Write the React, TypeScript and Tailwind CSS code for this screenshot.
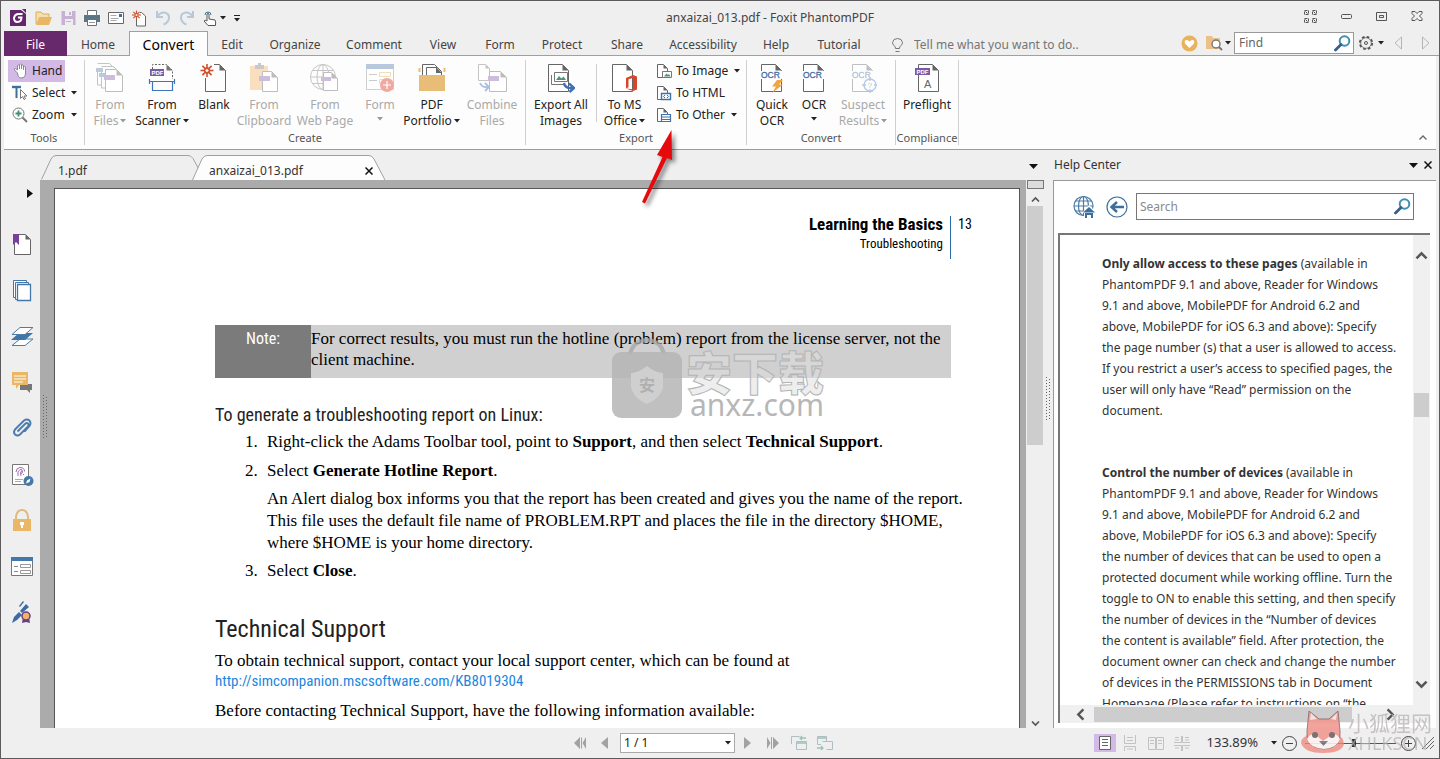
import { useState, type ReactNode } from "react";

const UI = "font-['Noto_Sans','Noto_Sans_CJK_SC',sans-serif]";
const NARROW = "font-['Roboto_Condensed','Liberation_Sans',sans-serif]";

const menuTabs = [
  { name: "Home", width: "w-[62px]" },
  { name: "Convert", width: "w-[79px]" },
  { name: "Edit", width: "w-[48px]" },
  { name: "Organize", width: "w-[78px]" },
  { name: "Comment", width: "w-[80px]" },
  { name: "View", width: "w-[58px]" },
  { name: "Form", width: "w-[56px]" },
  { name: "Protect", width: "w-[68px]" },
  { name: "Share", width: "w-[62px]" },
  { name: "Accessibility", width: "w-[90px]" },
  { name: "Help", width: "w-[56px]" },
  { name: "Tutorial", width: "w-[70px]" },
];

const helpSections = [
  {
    title: "Only allow access to these pages",
    lines: [
      " (available in",
      "PhantomPDF 9.1 and above, Reader for Windows",
      "9.1 and above, MobilePDF for Android 6.2 and",
      "above, MobilePDF for iOS 6.3 and above): Specify",
      "the page number (s) that a user is allowed to access.",
      "If you restrict a user’s access to specified pages, the",
      "user will only have “Read” permission on the",
      "document.",
    ],
  },
  {
    title: "Control the number of devices",
    lines: [
      " (available in",
      "PhantomPDF 9.1 and above, Reader for Windows",
      "9.1 and above, MobilePDF for Android 6.2 and",
      "above, MobilePDF for iOS 6.3 and above): Specify",
      "the number of devices that can be used to open a",
      "protected document while working offline. Turn the",
      "toggle to ON to enable this setting, and then specify",
      "the number of devices in the “Number of devices",
      "the content is available” field. After protection, the",
      "document owner can check and change the number",
      "of devices in the PERMISSIONS tab in Document",
      "Homepage (Please refer to instructions on “the",
    ],
  },
];

function Svg({ w, h, children, className = "" }: { w: number; h: number; children: ReactNode; className?: string }) {
  return (
    <svg width={w} height={h} viewBox={`0 0 ${w} ${h}`} fill="none" className={`shrink-0 ${className}`} aria-hidden="true">
      {children}
    </svg>
  );
}

function Caret({ color = "#222", className = "" }: { color?: string; className?: string }) {
  return (
    <Svg w={6} h={4} className={className}>
      <path d="M0 0h6L3 3.6z" fill={color} />
    </Svg>
  );
}

function Sheet({ x, y, w, h, f = 6, s = "#666" }: { x: number; y: number; w: number; h: number; f?: number; s?: string }) {
  return (
    <>
      <path d={`M${x} ${y}h${w - f}l${f} ${f}v${h - f}h${-w}z`} fill="#fff" stroke={s} />
      <path d={`M${x + w - f} ${y}v${f}h${f}z`} fill={s} />
    </>
  );
}

function Magnifier({ size = 17 }: { size?: number }) {
  return (
    <svg width={size} height={size} viewBox="0 0 17 17" fill="none" aria-hidden="true">
      <circle cx="10.5" cy="6" r="4.8" stroke="#3f8fb5" strokeWidth="2" />
      <path d="M7 9.5l-5.5 5.5" stroke="#3a5f85" strokeWidth="2.8" strokeLinecap="round" />
    </svg>
  );
}

/* ---------- ribbon icons ---------- */

function FilesIcon() {
  return (
    <Svg w={28} h={30}>
      <path d="M1.5 5v17h4M1.5 .5h12l4 4" stroke="#c4c4c4" />
      <path d="M5.500 6v19h4M5.500 3.500h12l3 3" stroke="#c4c4c4" />
      <path d="M0 5h7v4H0zM3 10h6v4H3z" fill="#bccbd8" />
      <Sheet x={9.5} y={6.5} w={17} h={22} s="#bdbdbd" />
      <path d="M8 12h11v5H8z" fill="#cdbddd" />
    </Svg>
  );
}

function ScannerIcon() {
  return (
    <Svg w={28} h={30}>
      <path d="M4.5 6V1.500h14l6 6V16" stroke="#666" strokeDasharray="2 1.5" />
      <path d="M18.500 1.500v6h6z" fill="#777" />
      <path d="M2 6h14v7H2z" fill="#7a5aa5" />
      <text x="3.500" y="11.800" fontSize="6" fontWeight="700" fill="#fff" fontFamily="Liberation Sans">PDF</text>
      <path d="M1.500 16v5M26.500 16v5M1.500 18.500h25M4.500 18.500v9h20v-9" stroke="#3e74b8" strokeWidth="1.200" />
    </Svg>
  );
}

function Burst({ x, y, r }: { x: number; y: number; r: number }) {
  return (
    <g transform={`translate(${x} ${y})`} stroke="#d0532f" strokeWidth={r / 4}>
      <circle r={r / 2.8} />
      {[0, 45, 90, 135, 180, 225, 270, 315].map((a) => (
        <path key={a} d={`M0 ${-r / 2.5}V${-r}`} transform={`rotate(${a})`} />
      ))}
    </g>
  );
}

function BlankIcon() {
  return (
    <Svg w={28} h={30}>
      <path d="M5.500 15v13.500h20v-21l-6-6H14" stroke="#666" />
      <path d="M19.500 1.500v6h6z" fill="#666" />
      <Burst x={7} y={7.500} r={6.500} />
    </Svg>
  );
}

function ClipboardIcon() {
  return (
    <Svg w={28} h={30}>
      <path d="M0 3h18v24H0z" fill="#f9dfbd" />
      <path d="M5 4V2h3V0h3v2h3v4H5z" fill="#c9c9c9" />
      <Sheet x={12.5} y={8.5} w={15} h={20} s="#bdbdbd" />
      <path d="M9 13h11v5H9z" fill="#cdbddd" />
    </Svg>
  );
}

function WebIcon() {
  return (
    <Svg w={30} h={30}>
      <g stroke="#c6c6c6">
        <circle cx="13" cy="14" r="12.500" />
        <ellipse cx="13" cy="14" rx="6" ry="12.500" />
        <path d="M13 1.500v25M.5 14h25M2.500 7.500h21M2.500 20.500h21" />
      </g>
      <Sheet x={13.5} y={9.500} w={14} h={18} s="#bdbdbd" />
      <path d="M11 14h10v4H11z" fill="#cdbddd" />
    </Svg>
  );
}

function FormIcon() {
  return (
    <Svg w={30} h={30}>
      <path d="M1.500 1.500h27v25h-27z" fill="#fff" stroke="#cfcfcf" />
      <path d="M1 1h28v5H1z" fill="#b8c8dd" />
      <path d="M4 11.500h8M4 17.500h8" stroke="#ccc" />
      <path d="M14.500 9.500h11v4h-11zM14.500 16.500h11v4h-11z" stroke="#f1ddb8" />
      <circle cx="22" cy="22" r="7" fill="#f0a9a0" />
      <path d="M22 18v8M18 22h8" stroke="#fff" strokeWidth="1.200" />
    </Svg>
  );
}

function PortfolioIcon() {
  return (
    <Svg w={28} h={30}>
      <path d="M1.500 5v4M26.500 5v4" stroke="#e7bd75" strokeWidth="2" />
      <path d="M4.500 12V1.500h12l3 3" stroke="#666" />
      <path d="M8.500 12V4.500h11l4 4V12" fill="#fff" stroke="#666" />
      <path d="M18 4l6 6h-6z" fill="#666" />
      <path d="M1 12h26v16H1z" fill="#e8bd77" />
    </Svg>
  );
}

function CombineIcon() {
  return (
    <Svg w={30} h={30}>
      <Sheet x={1.500} y={1.500} w={11} h={16} f={4} s="#c4c4c4" />
      <Sheet x={12.500} y={8.500} w={17} h={20} s="#bdbdbd" />
      <path d="M11 13h11v5H11z" fill="#cdbddd" />
      <path d="M3 20q2 5 8 4M8 20l4 4-4 4" stroke="#a9bfe2" strokeWidth="1.800" />
    </Svg>
  );
}

function ExportImagesIcon() {
  return (
    <Svg w={28} h={30}>
      <Sheet x={1.5} y={1.5} w={20} h={27} />
      <path d="M4.500 12v9.500h12" stroke="#777" />
      <path d="M7.500 9.500h13v9h-13z" fill="#fff" stroke="#777" />
      <path d="M9 17l3-4 2.500 2.500 2-2 2.500 3.500z" fill="#4d9474" />
      <path d="M17 20q1 6 9 5M22 20.500l5 4.500-4.500 4" stroke="#3e70ba" strokeWidth="2.400" />
    </Svg>
  );
}

function OfficeIcon() {
  return (
    <Svg w={28} h={30}>
      <Sheet x={1.5} y={1.5} w={20} h={27} />
      <path d="M15 15l7-3 4 1.500v13l-4 1.500-7-2.500 7 .8V15l-4.500 1.200v8L15 25.500z" fill="#d8452a" />
    </Svg>
  );
}

function OcrIcon({ kind }: { kind?: "quick" | "suspect" }) {
  const dim = kind === "suspect";
  return (
    <Svg w={28} h={30} className={dim ? "opacity-40" : ""}>
      <Sheet x={3.5} y={1.5} w={20} h={27} />
      <path d="M3 8h21v8H3z" fill="#fff" />
      <text x="3" y="14.500" fontSize="8.500" fill="#3e6ea8" stroke="#3e6ea8" strokeWidth=".3" fontFamily="Liberation Sans">OCR</text>
      {kind === "quick" && <path d="M19 17h6l-4 4.500h4L14 30l4-6.500h-4z" fill="#efa540" />}
      {dim && (
        <g stroke="#4c7fc0" strokeWidth="1.300">
          <circle cx="21" cy="22" r="6" fill="#fff" />
          <path d="M21 14v4M21 26v4M13 22h4M25 22h4" />
          <text x="18.800" y="25" fontSize="8" stroke="none" fill="#4c7fc0" fontFamily="Liberation Sans">?</text>
        </g>
      )}
    </Svg>
  );
}

function PreflightIcon() {
  return (
    <Svg w={28} h={30}>
      <Sheet x={5.5} y={1.500} w={20} h={27} />
      <path d="M2 5h15v7H2z" fill="#7a5aa5" />
      <text x="3.500" y="10.800" fontSize="6" fontWeight="700" fill="#fff" fontFamily="Liberation Sans">PDF</text>
      <text x="11" y="24.500" fontSize="11" fill="#666" fontFamily="Liberation Sans">A</text>
    </Svg>
  );
}

/* ---------- ribbon pieces ---------- */

function BigButton({ icon, top, bottom, caret, disabled, className }: {
  icon: ReactNode;
  top: string;
  bottom?: string;
  caret?: boolean;
  disabled?: boolean;
  className: string;
}) {
  return (
    <button
      disabled={disabled}
      className={`flex shrink-0 flex-col items-center whitespace-nowrap pt-[7px] text-xs leading-4 ${disabled ? "text-[#a9a9a9]" : "text-[#222]"} ${className}`}
    >
      <span className="flex h-[34px] items-start">{icon}</span>
      <span>{top}</span>
      <span className="flex h-4 items-center gap-0.5">
        {bottom}
        {caret && <Caret color={disabled ? "#999" : "#222"} className={bottom ? "" : "mb-1"} />}
      </span>
    </button>
  );
}

function Group({ label, children, className = "" }: { label: string; children: ReactNode; className?: string }) {
  return (
    <section className={`my-1 flex shrink-0 flex-col border-r border-[#d0d0d0] ${className}`}>
      <div className="-mt-1 flex h-[74px] shrink-0">{children}</div>
      <h2 className="text-center text-[11px] leading-4 text-[#555]">{label}</h2>
    </section>
  );
}

function SmallButton({ icon, label, caret, active }: { icon: ReactNode; label: string; caret?: boolean; active?: boolean }) {
  return (
    <button className={`flex h-[22px] items-center whitespace-nowrap text-xs text-[#222] ${active ? "bg-[#d3b9e6] pr-[3px]" : ""}`}>
      <span className="flex w-6 justify-center">{icon}</span>
      <span>{label}</span>
      {caret && <Caret className="ml-1.5" />}
    </button>
  );
}

function Ribbon() {
  return (
    <div className="mx-[3px] flex h-[94px] shrink-0 border-b border-[#9b9b9b] bg-[#fdfdfd]">
      <Group label="Tools" className="w-[81px]">
        <div className="ml-1 flex flex-col items-start pt-1">
          <SmallButton
            active
            label="Hand"
            icon={
              <Svg w={15} h={16}>
                <path d="M4.500 10L1.500 7q-.5-1.500 1-1.500L4.500 7V2.500q1-1 2 0V6 1.500q1-1 2 0V6 2.500q1-1 2 0V7 4q1-1 2 0v6q0 5-4.500 5-3 0-3.500-5z" fill="#fff" stroke="#8d8496" />
              </Svg>
            }
          />
          <SmallButton
            caret
            label="Select"
            icon={
              <Svg w={16} h={16}>
                <path d="M0 2h9" stroke="#3d7199" strokeWidth="2.400" />
                <path d="M4.500 2v11" stroke="#3d7199" strokeWidth="2" />
                <path d="M8.500 4.500v9l2-2 1.500 3 1.500-.8-1.500-2.700h3z" fill="#fff" stroke="#777" />
              </Svg>
            }
          />
          <SmallButton
            caret
            label="Zoom"
            icon={
              <Svg w={16} h={16}>
                <circle cx="6.500" cy="6.500" r="5.500" stroke="#777" />
                <path d="M6.500 3.500v6M3.500 6.500h6" stroke="#3f9070" strokeWidth="1.800" />
                <path d="M10.500 10.500l4.500 4.500" stroke="#777" strokeWidth="2" />
              </Svg>
            }
          />
        </div>
      </Group>
      <Group label="Create" className="w-[441px]">
        <BigButton className="w-[50px]" icon={<FilesIcon />} top="From" bottom="Files" caret disabled />
        <BigButton className="w-[54px]" icon={<ScannerIcon />} top="From" bottom="Scanner" caret />
        <BigButton className="w-[50px]" icon={<BlankIcon />} top="Blank" />
        <BigButton className="w-[50px]" icon={<ClipboardIcon />} top="From" bottom="Clipboard" disabled />
        <BigButton className="w-[72px]" icon={<WebIcon />} top="From" bottom="Web Page" disabled />
        <BigButton className="w-[38px]" icon={<FormIcon />} top="Form" caret disabled />
        <BigButton className="w-[65px]" icon={<PortfolioIcon />} top="PDF" bottom="Portfolio" caret />
        <BigButton className="w-[56px]" icon={<CombineIcon />} top="Combine" bottom="Files" disabled />
      </Group>
      <Group label="Export" className="w-[221px]">
        <BigButton className="w-[70px]" icon={<ExportImagesIcon />} top="Export All" bottom="Images" />
        <div className="my-2 border-r border-[#d0d0d0]" />
        <BigButton className="w-[55px]" icon={<OfficeIcon />} top="To MS" bottom="Office" caret />
        <div className="flex flex-col items-start pt-1">
          <SmallButton
            caret
            label="To Image"
            icon={
              <Svg w={16} h={16}>
                <Sheet x={1.5} y={1.500} w={10} h={13} f={4} />
                <path d="M6.500 8.500h9v6h-9z" fill="#fff" stroke="#777" />
                <path d="M8 13.500l2.500-3 1.500 1.500 1-1 1.500 2.500z" fill="#4d9474" />
              </Svg>
            }
          />
          <SmallButton
            label="To HTML"
            icon={
              <Svg w={16} h={16}>
                <Sheet x={1.5} y={1.500} w={10} h={13} f={4} />
                <path d="M5.500 8.500h9v6h-9z" fill="#fff" stroke="#3e74a8" strokeWidth="1.400" />
                <path d="M9 10l-1.500 1.500L9 13M11 10l1.500 1.500L11 13" stroke="#3e74a8" />
              </Svg>
            }
          />
          <SmallButton
            caret
            label="To Other"
            icon={
              <Svg w={16} h={16}>
                <Sheet x={1.5} y={1.500} w={10} h={13} f={4} />
                <path d="M5.500 7.500h9v7h-9zM5.500 10h9M5.500 12.500h9" fill="#fff" stroke="#3e74a8" strokeWidth="1.200" />
              </Svg>
            }
          />
        </div>
      </Group>
      <Group label="Convert" className="w-[149px]">
        <BigButton className="w-[50px]" icon={<OcrIcon kind="quick" />} top="Quick" bottom="OCR" />
        <BigButton className="w-[34px]" icon={<OcrIcon />} top="OCR" caret />
        <BigButton className="w-[64px]" icon={<OcrIcon kind="suspect" />} top="Suspect" bottom="Results" caret disabled />
      </Group>
      <Group label="Compliance" className="w-[63px]">
        <BigButton className="w-[62px]" icon={<PreflightIcon />} top="Preflight" />
      </Group>
      <button aria-label="Collapse ribbon" className="mb-1.5 ml-auto mr-2 self-end">
        <Svg w={10} h={10}>
          <path d="M1.500 6.500L5 3l3.500 3.500" stroke="#666" strokeWidth="1.300" />
        </Svg>
      </button>
    </div>
  );
}

function TitleBar() {
  return (
    <header className="grid h-[30px] shrink-0 grid-cols-[1fr_auto_1fr] items-center">
      <div className="flex items-center pl-[9px] pt-1">
        <Svg w={18} h={18} className="mr-[7px]">
          <path d="M0 1h11l5 4v12H0z" fill="#64276b" />
          <path d="M12 0h4v4z" fill="#64276b" />
          <path d="M12.500 5H8Q4.500 5.500 4 9q0 4 3.500 4 4 0 4-4.500H8" stroke="#fff" strokeWidth="1.900" />
        </Svg>
        <button aria-label="Open" className="mr-2">
          <Svg w={18} h={16}>
            <path d="M1 14V2h5l2 2h6v3" fill="#f6dfae" stroke="#e0ac58" />
            <path d="M1 15l3-8h13l-3 8z" fill="#e8b765" />
          </Svg>
        </button>
        <button aria-label="Save" className="mr-2">
          <Svg w={15} h={16}>
            <path d="M.5 1h14v14H.5z" fill="#c6b1d3" />
            <path d="M4 1h7v5H4zM4 9h8v6H4z" fill="#eee" />
            <path d="M8 2h2v3H8zM5 11h5v1H5z" fill="#c6b1d3" />
          </Svg>
        </button>
        <button aria-label="Print" className="mr-2">
          <Svg w={16} h={16}>
            <path d="M0 5h16v7H0z" fill="#66727c" />
            <path d="M3.500.5h9v5h-9z" fill="#fff" stroke="#66727c" />
            <path d="M3.500 9.500h9v6h-9z" fill="#fff" stroke="#66727c" />
            <path d="M2 7.500h12" stroke="#2b86a8" strokeWidth="1.500" />
            <path d="M5 12.500h6" stroke="#999" />
          </Svg>
        </button>
        <button aria-label="Email" className="mr-2">
          <Svg w={16} h={14}>
            <path d="M.5 1.500h15v11H.5z" fill="#fff" stroke="#666" />
            <path d="M2.500 4.500h6M2.500 7.500h8M2.500 9.500h6" stroke="#aaa" />
            <path d="M11 3h3v3h-3z" fill="#3d7199" />
          </Svg>
        </button>
        <button aria-label="New blank" className="mr-2">
          <Svg w={15} h={17}>
            <path d="M4.500 8v8h9V6l-4-3.500H8" fill="#fff" stroke="#666" />
            <Burst x={4.500} y={5} r={4.500} />
          </Svg>
        </button>
        <button aria-label="Undo" className="mr-2" disabled>
          <Svg w={16} h={16}>
            <path d="M2 1v6h6M2.500 6.500Q5 2 9.500 2.500q5 1 4.500 6-1 4.500-5.500 6" stroke="#b7c9d9" strokeWidth="2" />
          </Svg>
        </button>
        <button aria-label="Redo" className="mr-2" disabled>
          <Svg w={16} h={16}>
            <path d="M14 1v6H8M13.500 6.500Q11 2 6.500 2.500q-5 1-4.500 6 1 4.500 5.500 6" stroke="#b7c9d9" strokeWidth="2" />
          </Svg>
        </button>
        <button aria-label="Touch mode" className="mr-2 flex items-center gap-[3px]">
          <Svg w={14} h={16}>
            <path d="M2 5a3 3 0 1 1 6 0" stroke="#3d7199" />
            <path d="M4 10V4q1-1.500 2 0v5l6 1q1 1 .5 5.500H5L1 11q1-1.500 3 0z" fill="#fff" stroke="#555" />
          </Svg>
          <Caret />
        </button>
        <button aria-label="Customize toolbar">
          <Svg w={6} h={7}>
            <path d="M0 .5h6" stroke="#222" />
            <path d="M0 3h6L3 6.500z" fill="#222" />
          </Svg>
        </button>
      </div>
      <h1 className="ml-[100px] whitespace-nowrap pt-1 text-xs text-[#444]">anxaizai_013.pdf - Foxit PhantomPDF</h1>
      <div className="flex items-center justify-end gap-6 pr-4">
        <button aria-label="Full screen">
          <Svg w={13} h={13}>
            {[[0.5, 0.5], [8.5, 0.5], [0.5, 8.5], [8.5, 8.5]].map(([x, y]) => (
              <g key={`${x}-${y}`} stroke="#555">
                <path d={`M${x} ${y}h4v4h-4z`} strokeDasharray="3 1" />
                <path d={`M${x + 1} ${y + 1}l2 2`} />
              </g>
            ))}
          </Svg>
        </button>
        <button aria-label="Minimize">
          <Svg w={11} h={5}>
            <rect x=".5" y=".5" width="10" height="4" rx="1" stroke="#555" />
          </Svg>
        </button>
        <button aria-label="Restore">
          <Svg w={11} h={9}>
            <path d="M.5.5h10v8H.5z" stroke="#555" />
            <path d="M3.500 3.500h4v2h-4z" stroke="#555" />
          </Svg>
        </button>
        <button aria-label="Close window">
          <Svg w={12} h={10}>
            <path d="M1 .5h3l2 2 2-2h3v2L8.500 5 11 7.500v2H8l-2-2-2 2H1v-2L3.500 5 1 2.500z" stroke="#555" />
          </Svg>
        </button>
      </div>
    </header>
  );
}

function MenuBar({ tab, setTab }: { tab: string; setTab: (t: string) => void }) {
  return (
    <nav className="flex h-[25px] shrink-0 items-stretch">
      <button className="ml-[3px] w-[63px] bg-[#68286c] pt-0.5 text-xs text-white">File</button>
      <div className="flex flex-1 border-b border-[#a0a0a0]">
        {menuTabs.map((t) => (
          <button
            key={t.name}
            onClick={() => setTab(t.name)}
            className={`shrink-0 ${t.width} ${
              tab === t.name
                ? "-mb-px border border-b-0 border-[#a0a0a0] bg-[#fdfdfd] pt-0.5 text-sm leading-4 text-black"
                : "pt-1 text-xs text-[#444]"
            }`}
          >
            {t.name}
          </button>
        ))}
        <label className="ml-[17px] flex items-center gap-2.5 pt-1 text-xs">
          <Svg w={13} h={16}>
            <path d="M4.500 11.500q0-2-1.500-3Q1.500 7 1.500 5.500 2 1.500 6.500 1.500t5 4q0 1.500-1.500 3-1.500 1-1.500 3zM4.500 14.500h4" stroke="#777" />
          </Svg>
          <input
            aria-label="Tell me what you want to do"
            placeholder="Tell me what you want to do.."
            className="w-[190px] bg-transparent outline-none placeholder:text-[#757575]"
          />
        </label>
        <div className="ml-auto flex items-center pr-[9px]">
          <button aria-label="Favorites" className="mr-2">
            <Svg w={17} h={17}>
              <circle cx="8.500" cy="8.500" r="8" fill="#e9b25c" />
              <path d="M8.500 13L4 8.500q-1-2.500 1-3.500 2-.5 3.500 1.500Q10 4.500 12 5q2 1 1 3.500z" fill="#fff" />
            </Svg>
          </button>
          <button aria-label="Find file" className="mr-[3px] flex items-center gap-0.5">
            <Svg w={17} h={16}>
              <path d="M0 1h6l1 2h7v11H0z" fill="#ebc185" />
              <circle cx="10" cy="9" r="4" fill="#fff" stroke="#777" strokeWidth="1.400" />
              <path d="M13 12l3 3" stroke="#777" strokeWidth="1.800" />
            </Svg>
            <Caret />
          </button>
          <div className="flex h-[22px] w-[120px] items-center border border-[#999] bg-white">
            <input aria-label="Find" placeholder="Find" className="w-full min-w-0 pl-1 text-xs outline-none placeholder:text-[#666]" />
            <button aria-label="Run find" className="pr-0.5">
              <Magnifier />
            </button>
          </div>
          <button aria-label="Find options" className="ml-1 flex items-center gap-1">
            <Svg w={16} h={16}>
              <circle cx="8" cy="8" r="6" stroke="#555" strokeWidth="2.200" strokeDasharray="2.600 2.110" />
              <circle cx="8" cy="8" r="5.300" fill="#efefef" stroke="#555" strokeWidth=".7" />
              <circle cx="8" cy="8" r="1.500" stroke="#555" />
            </Svg>
            <Caret />
          </button>
          <button aria-label="Previous result" className="ml-2.5">
            <Svg w={8} h={14}>
              <path d="M7.500 1v12l-6.500-6z" stroke="#b5b5b5" />
            </Svg>
          </button>
          <button aria-label="Next result" className="ml-5">
            <Svg w={8} h={14}>
              <path d="M.5 1v12L7 7z" stroke="#b5b5b5" />
            </Svg>
          </button>
        </div>
      </div>
    </nav>
  );
}

function DocTabs() {
  return (
    <div className="flex min-w-0 flex-1 items-end">
      <div className="ml-[37px] flex flex-1 items-end">
        <button className="relative h-[25px] w-[159px] pl-[17px] pt-1.5 text-left text-xs text-[#333]">
          <svg className="absolute inset-0 h-full w-full" viewBox="0 0 159 25" fill="none" aria-hidden="true">
            <path d="M.5 24.500L10 4Q12 .5 15 .5h132q3 0 5 3l6.500 12" fill="#efefef" stroke="#a0a0a0" />
          </svg>
          <span className="relative">1.pdf</span>
        </button>
        <div className="relative -ml-2 flex h-[25px] w-[194px] items-center justify-between pl-[17px] pr-[13px] pt-1.5 text-xs text-[#333]">
          <svg className="absolute inset-0 h-full w-full" viewBox="0 0 194 25" fill="none" aria-hidden="true">
            <path d="M.5 25L10 4Q12 .5 15 .5h162q3 0 5 3.500l11 21" fill="#fdfdfd" stroke="#a0a0a0" />
          </svg>
          <a href="#document" className="relative">anxaizai_013.pdf</a>
          <button aria-label="Close tab" className="relative">
            <Svg w={8} h={8}>
              <path d="M.5.5l7 7M7.500.5l-7 7" stroke="#111" strokeWidth="1.500" />
            </Svg>
          </button>
        </div>
      </div>
      <button aria-label="Tab list" className="mb-[11px]">
        <Svg w={9} h={5}>
          <path d="M0 0h9L4.500 5z" fill="#111" />
        </Svg>
      </button>
    </div>
  );
}

const sideIcons: { name: string; icon: ReactNode }[] = [
  {
    name: "Bookmarks",
    icon: (
      <>
        <Sheet x={3.5} y={1.5} w={16} h={20} f={5} />
        <path d="M2 1h6v11l-3-3-3 3z" fill="#7a3f96" />
      </>
    ),
  },
  {
    name: "Pages",
    icon: (
      <g stroke="#4478a8" fill="#fff">
        <path d="M2.500 1.500h13v17h-13z" />
        <path d="M4.500 3.500h13v17h-13z" />
        <path d="M6.500 5.500h13v16h-13z" strokeWidth="1.300" />
      </g>
    ),
  },
  {
    name: "Layers",
    icon: (
      <>
        <path d="M1 20.500L9 14h13l-8 6.500z" fill="#fff" stroke="#4d7ca5" />
        <path d="M0 15l8-7h14l-8 7z" fill="#3f76a8" />
        <path d="M1 9.500L9 2.500h13l-8 7z" fill="#fff" stroke="#4d7ca5" />
      </>
    ),
  },
  {
    name: "Comments",
    icon: (
      <>
        <path d="M9 13h12v6h-2v3l-3-3H9z" fill="#777" />
        <path d="M1 1h16v13H8l-3 4v-4H1z" fill="#e9b765" />
        <path d="M3 5h12M3 8h12M3 11h9" stroke="#fff" />
      </>
    ),
  },
  {
    name: "Attachments",
    icon: (
      <path
        d="M7 15l8-8q1.500-1 2.500 0 1 1.500 0 3l-8 8q-2.500 2-5 0-2-2.500 0-5L13.500 4q3-2 5.500 0 2 2.500 0 5.500l-5 5.500"
        transform="translate(-.5 -.5)"
        stroke="#4c7caf"
        strokeWidth="1.900"
      />
    ),
  },
  {
    name: "Signatures",
    icon: (
      <>
        <path d="M1.500 1.500h16v20h-16z" fill="#fff" stroke="#777" />
        <path d="M5 9q0-4 4-4.500 4.500 0 4.500 4M7 13q-1-5 2-6.500 2.500-.5 2.500 2t-2 2M10 13q-1-3 0-4.500 1-1 1 .5M12 12l1-1" stroke="#a16bb0" />
        <path d="M4 16.500h8M4 18.500h6" stroke="#aaa" />
        <circle cx="17.500" cy="18" r="5" fill="#4478a8" />
        <path d="M15 20.500l1-3 3.500-2-1 3.500z" fill="#fff" />
      </>
    ),
  },
  {
    name: "Security",
    icon: (
      <>
        <path d="M5 11V7.500Q6 1 11 1t6 6.500V11" stroke="#e0ba80" strokeWidth="2" />
        <path d="M2 10h18v12H2z" fill="#e9b765" />
        <path d="M9 13h4v3h-1v3h-2v-3H9z" fill="#fff" />
      </>
    ),
  },
  {
    name: "Fields",
    icon: (
      <>
        <path d="M.5 2.500h21v18H.5z" fill="#fff" stroke="#777" />
        <path d="M0 2h22v4H0z" fill="#4478a8" />
        <path d="M3 11.500h4M3 16.500h4" stroke="#888" />
        <path d="M9.500 9.500h10v3h-10zM9.500 15.500h10v3h-10z" stroke="#999" />
      </>
    ),
  },
  {
    name: "Digital certificates",
    icon: (
      <>
        <path d="M1 22l2-6 5-5 3 3-5 5z" fill="#3f68a5" />
        <path d="M9 10l6-7 3 3-7 6zM8 5l4-5 1 1-4 5z" fill="#3f68a5" />
        <path d="M12 16l-1 6 4-1 4 1-1-6z" fill="#6b3f7a" />
        <circle cx="15" cy="15" r="4" fill="#efb26b" stroke="#6b3f7a" strokeWidth="1.500" />
      </>
    ),
  },
];

function SideBar() {
  return (
    <aside className="flex w-9 shrink-0 flex-col items-center pt-[9px]">
      <button aria-label="Expand panel" className="self-end pr-[7px]">
        <Svg w={6} h={9}>
          <path d="M0 0l6 4.500L0 9z" fill="#111" />
        </Svg>
      </button>
      <div className="mt-[35px] flex flex-col gap-[23px]">
        {sideIcons.map((s) => (
          <button key={s.name} aria-label={s.name} className="h-[23px] w-[23px]">
            <Svg w={23} h={23}>{s.icon}</Svg>
          </button>
        ))}
      </div>
    </aside>
  );
}

function AnxzWatermark() {
  return (
    <div className="pointer-events-none absolute left-[557px] top-[147px]">
      <svg width="216" height="84" viewBox="0 0 216 84" fill="none" aria-hidden="true">
        <path d="M18 18q3-13 17-14 14 1 17 14" stroke="#a8a8a8" strokeWidth="4" opacity=".8" />
        <rect y="16" width="70" height="66" rx="9" fill="#b5b5b5" opacity=".85" />
        <path d="M35 30q7 6 16 7v14q-2 11-16 17-14-6-16-17V37q9-1 16-7z" fill="#cfcfcf" />
        <text x="27" y="55" fontSize="16" fill="#b0b0b0" fontFamily="Noto Sans CJK SC" fontWeight="700">安</text>
        <text x="74" y="54" fontSize="46" fill="#dedede" fillOpacity=".5" stroke="#b4b4b4" fontFamily="Noto Sans CJK SC" fontWeight="900">安下载</text>
        <text x="78" y="80" fontSize="30" fill="#b7b7b7" fontFamily="Noto Sans">anxz.com</text>
      </svg>
    </div>
  );
}

function PdfPage() {
  return (
    <main id="document" className="flex min-w-0 flex-1 overflow-hidden bg-[#ababab]">
      <div className="flex w-[14px] shrink-0 items-center justify-center pb-[75px] pr-[3px]">
        <Splitter />
      </div>
      <div className="relative mt-2 min-w-0 flex-1 overflow-hidden border border-b-0 border-[#555] bg-white pl-[160px] pr-[68px] font-['Liberation_Serif',serif] text-[17px] leading-[21px] text-black">
        <div className={`mt-[27px] flex justify-end ${NARROW}`}>
          <div className="border-r border-[#2a6ca8] pr-[7px] text-right">
            <p className="text-[17px] font-bold leading-4">Learning the Basics</p>
            <p className="mb-[6px] mt-[3px] text-[13px] leading-[18px]">Troubleshooting</p>
          </div>
          <span className="-mr-6 w-6 pl-[7px] text-sm leading-4">13</span>
        </div>
        <div className="mt-[66px] flex h-[53px]">
          <div className={`w-24 shrink-0 bg-[#7b7b7b] pt-0.5 text-center text-base text-white ${NARROW}`}>Note:</div>
          <p className="flex-1 whitespace-nowrap bg-[#d0d0d0] pt-[3px]">
            For correct results, you must run the hotline (problem) report from the license server, not the
            <br />
            client machine.
          </p>
        </div>
        <h3 className={`mt-[26px] text-lg leading-[21px] text-[#222] ${NARROW}`}>To generate a troubleshooting report on Linux:</h3>
        <ol className="whitespace-nowrap pl-[30px]">
          <li className="mt-1.5 flex">
            <span className="w-[22px] shrink-0">1.</span>
            <p>Right-click the Adams Toolbar tool, point to <b>Support</b>, and then select <b>Technical Support</b>.</p>
          </li>
          <li className="mt-2 flex">
            <span className="w-[22px] shrink-0">2.</span>
            <div>
              <p>Select <b>Generate Hotline Report</b>.</p>
              <p className="mt-[7px] leading-[22px]">
                An Alert dialog box informs you that the report has been created and gives you the name of the report.
                <br />
                This file uses the default file name of PROBLEM.RPT and places the file in the directory $HOME,
                <br />
                where $HOME is your home directory.
              </p>
            </div>
          </li>
          <li className="mt-1.5 flex">
            <span className="w-[22px] shrink-0">3.</span>
            <p>Select <b>Close</b>.</p>
          </li>
        </ol>
        <h2 className={`mt-[33px] text-2xl leading-[30px] text-[#222] ${NARROW}`}>Technical Support</h2>
        <p className="mt-1.5">To obtain technical support, contact your local support center, which can be found at</p>
        <a href="#kb" className={`block text-[15px] leading-[21px] text-[#1a86e0] ${NARROW}`}>http://simcompanion.mscsoftware.com/KB8019304</a>
        <p className="mt-2">Before contacting Technical Support, have the following information available:</p>
        <AnxzWatermark />
      </div>
      <div className="w-[6px] shrink-0" />
      <div className="flex w-[18px] shrink-0 flex-col items-center bg-[#efefef]">
        <div className="h-[9px] w-[17px] shrink-0 border border-[#777] bg-[#dcdcdc]" />
        <button aria-label="Scroll up" className="mt-1.5">
          <Chevron dir="up" />
        </button>
        <div className="mt-0.5 h-[239px] w-4 bg-[#cdcdcd]" />
        <button aria-label="Scroll down" className="mt-auto">
          <Chevron dir="down" />
        </button>
      </div>
    </main>
  );
}

function Splitter() {
  return (
    <Svg w={5} h={44}>
      <path d="M.5 0v44M3.500 2v42" stroke="#666" strokeDasharray="1 2" />
    </Svg>
  );
}

function Chevron({ dir, big }: { dir: "up" | "down" | "left" | "right"; big?: boolean }) {
  const turn = { up: "", down: "rotate-180", left: "-rotate-90", right: "rotate-90" }[dir];
  return (
    <svg width={big ? 13 : 9} height={big ? 13 : 9} viewBox="0 0 9 9" fill="none" className={turn} aria-hidden="true">
      <path d="M1 6.500L4.500 3 8 6.500" stroke="#555" strokeWidth="1.700" />
    </svg>
  );
}

function HelpCenter() {
  return (
    <section className="flex w-[383px] shrink-0 flex-col border-l border-t border-[#999] bg-white">
      <div className="flex items-center pl-[19px] pr-[22px] pt-3">
        <button aria-label="Home page" className="mr-[10px]">
          <Svg w={23} h={24}>
            <g stroke="#4c7ca5" strokeWidth="1.200">
              <circle cx="10.500" cy="11" r="9.500" />
              <ellipse cx="10.500" cy="11" rx="5" ry="9.500" />
              <path d="M1 11h19M2.500 6h16M2.500 16h16M10.500 1.500v19" />
            </g>
            <path d="M16 10l8 8h-2v6H11v-6H9z" fill="#fff" />
            <path d="M16 12l6 5.500H10zM12 18h8v5h-2v-3h-4v3h-2z" fill="#3d6f9c" />
          </Svg>
        </button>
        <button aria-label="Back" className="mr-2">
          <Svg w={22} h={22}>
            <circle cx="11" cy="11" r="10" stroke="#3d6f9c" strokeWidth="1.200" />
            <path d="M18 11H6M11 6l-5.500 5 5.500 5" stroke="#3d6f9c" strokeWidth="2.500" />
          </Svg>
        </button>
        <div className="flex h-[27px] flex-1 items-center border border-[#777]">
          <input aria-label="Search help" placeholder="Search" className="min-w-0 flex-1 pl-[3px] text-xs outline-none placeholder:text-[#8a8a8a]" />
          <button aria-label="Search" className="pr-0.5">
            <Magnifier />
          </button>
        </div>
      </div>
      <div className="mb-[5px] ml-1 mr-1.5 mt-[13px] flex min-h-0 flex-1 flex-col border-l-2 border-t-2 border-[#777]">
        <div className="flex min-h-0 flex-1">
          <article className="min-w-0 flex-1 overflow-hidden whitespace-nowrap pl-[42px] pt-[18px] text-xs leading-[21px] text-[#333]">
            {helpSections.map((s) => (
              <p key={s.title} className="mb-[41px]">
                <b>{s.title}</b>
                {s.lines.map((l) => (
                  <span key={l}>
                    {l}
                    <br />
                  </span>
                ))}
              </p>
            ))}
          </article>
          <div className="flex w-[17px] shrink-0 flex-col items-center bg-[#f0f0f0] py-3.5">
            <button aria-label="Help up">
              <Chevron dir="up" big />
            </button>
            <div className="mt-[131px] h-6 w-[15px] shrink-0 bg-[#cdcdcd]" />
            <button aria-label="Help down" className="mt-auto">
              <Chevron dir="down" big />
            </button>
          </div>
        </div>
        <div className="flex h-[18px] shrink-0 items-center bg-[#f0f0f0] pl-[14px]">
          <button aria-label="Help left">
            <Chevron dir="left" big />
          </button>
          <div className="ml-[7px] h-[15px] w-[258px] bg-[#cdcdcd]" />
          <button aria-label="Help right" className="ml-8">
            <Chevron dir="right" big />
          </button>
        </div>
      </div>
    </section>
  );
}

function FoxWatermark() {
  return (
    <div className="pointer-events-none absolute bottom-0 right-0 opacity-90">
      <svg width="138" height="52" viewBox="0 0 138 52" fill="none" aria-hidden="true">
        <path d="M0 37q0-7 12-9h20q11 2 11 10-2 9-21 9T0 37z" fill="#f0877c" opacity=".85" />
        <path d="M6 25L8 5l10 8h10L37 5l2 20q2 17-16 18Q4 42 6 25z" fill="#f19a91" stroke="#8d6c70" />
        <path d="M9 14l1-7 6 6zM35 14l1-7-6 6z" fill="#fbe4e0" />
        <path d="M6 33q4-7 10-3l6 5 7-5q6-4 10 3-3 9-16 10Q9 42 6 33z" fill="#fbf3f2" />
        <circle cx="14" cy="29" r="3" fill="#6c6468" />
        <circle cx="31" cy="29" r="3" fill="#6c6468" />
        <path d="M18 35h9l-4.500 5z" fill="#7b7480" />
        <text x="47" y="25" fontSize="21" fill="#b5b0b0" fillOpacity=".8" fontFamily="Noto Sans CJK SC">小狐狸网</text>
        <text x="47" y="44" fontSize="18" fill="#b5b0b0" fillOpacity=".8" fontFamily="Noto Sans">XHLKSCN</text>
      </svg>
    </div>
  );
}

function StatusBar() {
  return (
    <footer className="relative flex h-[30px] shrink-0 items-center">
      <div className="flex-1" />
      <div className="flex items-center pr-[28px]">
        <button aria-label="First page">
          <Svg w={12} h={12}>
            <path d="M6 0v12L0 6zM8 0v12L7 11V1zM12 0v12L8.500 6z" fill="#a2a2a2" />
          </Svg>
        </button>
        <button aria-label="Previous page" className="ml-[15px]">
          <Svg w={7} h={12}>
            <path d="M7 0v12L0 6z" fill="#a2a2a2" />
          </Svg>
        </button>
        <div className="relative ml-3 w-[115px]">
          <select aria-label="Page" className="block h-5 w-full appearance-none border border-[#aaa] bg-white pl-[3px] text-xs leading-4 text-[#222]">
            <option>1 / 1</option>
          </select>
          <Caret className="pointer-events-none absolute right-1 top-2" />
        </div>
        <button aria-label="Next page" className="ml-[9px]">
          <Svg w={7} h={12}>
            <path d="M0 0v12l7-6z" fill="#a2a2a2" />
          </Svg>
        </button>
        <button aria-label="Last page" className="ml-4">
          <Svg w={12} h={12}>
            <path d="M0 0l3.500 6L0 12zM4 0h1v12H4zM6 0v12l6-6z" fill="#a2a2a2" />
          </Svg>
        </button>
        <button aria-label="Previous view" className="ml-3">
          <Svg w={16} h={16}>
            <path d="M.5 9V1.500h8M5.500 6.500h10v8h-10z" stroke="#aebec3" />
            <path d="M15 3H9M11 1L9 3l2 2M6 8h9" stroke="#9bc4b4" strokeWidth="1.300" />
          </Svg>
        </button>
        <button aria-label="Next view" className="ml-2.5">
          <Svg w={16} h={16}>
            <path d="M9.500 6V1.500h-9v8H4M5.500 6.500h10v8h-6" stroke="#aebec3" />
            <path d="M0 13h6M4 11l2 2-2 2M1 3h8" stroke="#9bc4b4" strokeWidth="1.300" />
          </Svg>
        </button>
      </div>
      <div className="flex flex-1 items-center justify-end pr-[5px]">
        <button aria-label="Single page" className="bg-[#d3b9e6] px-[5px] py-px">
          <Svg w={12} h={16}>
            <path d="M.5 1.500h11v13H.5z" fill="#fff" stroke="#666" />
            <path d="M3 4.500h6M3 7.500h6M3 10.500h6" stroke="#666" />
          </Svg>
        </button>
        <button aria-label="Continuous" className="ml-2">
          <Svg w={12} h={16}>
            <path d="M.5 0v8.500h11V0M.5 16v-4.500h11V16M3 2.500h6M3 5.500h6M3 14h6" stroke="#c2c2c2" />
          </Svg>
        </button>
        <button aria-label="Facing" className="ml-3">
          <Svg w={16} h={16}>
            <path d="M.5 2.500h7v12h-7zM8.500 2.500h7v12h-7zM2 5.500h4M2 8.500h4M10 5.500h4M10 8.500h4" stroke="#c2c2c2" />
          </Svg>
        </button>
        <button aria-label="Continuous facing" className="ml-2.5">
          <Svg w={16} h={16}>
            <path d="M0 7.500h7.500V1M16 7.500H8.500V1M0 10.500h7.500V16M16 10.500H8.500V16M1 2.500h4M1 5h4M11 2.500h4M11 5h4M1 13h4M11 13h4" stroke="#c2c2c2" />
          </Svg>
        </button>
        <span className="ml-[17px] text-[13px] text-[#333]">133.89%</span>
        <Caret className="ml-[13px]" />
        <button aria-label="Zoom out" className="ml-[5px]">
          <Svg w={15} h={15}>
            <circle cx="7.500" cy="7.500" r="7" stroke="#444" />
            <path d="M4 7.500h7" stroke="#444" />
          </Svg>
        </button>
        <input
          type="range"
          aria-label="Zoom level"
          defaultValue={54}
          className="ml-2 mr-[5px] h-3 w-[91px] appearance-none bg-[linear-gradient(#555,#555)] bg-[length:100%_1px] bg-center bg-no-repeat [&::-webkit-slider-thumb]:h-2 [&::-webkit-slider-thumb]:w-1 [&::-webkit-slider-thumb]:appearance-none [&::-webkit-slider-thumb]:bg-[#333]"
        />
        <button aria-label="Zoom in">
          <Svg w={15} h={15}>
            <circle cx="7.500" cy="7.500" r="7" stroke="#444" />
            <path d="M4 7.500h7M7.500 4v7" stroke="#444" />
          </Svg>
        </button>
        <Svg w={12} h={12} className="ml-1.5">
          <path d="M0 12L12 0M4 12l8-8M8 12l4-4" stroke="#666" />
        </Svg>
      </div>
      <FoxWatermark />
    </footer>
  );
}

function RedArrow() {
  return (
    <div className="pointer-events-none absolute left-[635px] top-[125px]">
      <svg width="46" height="82" viewBox="0 0 46 82" fill="none" className="drop-shadow-[3px_3px_2px_rgba(0,0,0,0.45)]" aria-hidden="true">
        <path d="M35.500 4L21 29l5.500 2L6 76l3 1.500L31 32l5 2z" fill="#e60a0e" />
      </svg>
    </div>
  );
}

export default function App() {
  const [tab, setTab] = useState("Convert");

  return (
    <div className={`relative flex h-screen flex-col overflow-hidden border border-[#5d5a5e] bg-[#efefef] ${UI}`}>
      <TitleBar />
      <MenuBar tab={tab} setTab={setTab} />
      <Ribbon />
      <div className="mx-[3px] flex h-[30px] shrink-0">
        <DocTabs />
        <div className="flex w-[398px] shrink-0 items-center pl-4 pr-1">
          <h2 className="text-xs text-[#333]">Help Center</h2>
          <button aria-label="Panel menu" className="ml-auto">
            <Svg w={9} h={5}>
              <path d="M0 0h9L4.500 5z" fill="#111" />
            </Svg>
          </button>
          <button aria-label="Close panel" className="ml-1.5">
            <Svg w={8} h={8}>
              <path d="M.5.5l7 7M7.500.5l-7 7" stroke="#111" strokeWidth="1.500" />
            </Svg>
          </button>
        </div>
      </div>
      <div className="mx-[3px] flex min-h-0 flex-1">
        <SideBar />
        <PdfPage />
        <div className="flex w-[9px] shrink-0 items-center justify-center pb-[110px]">
          <Splitter />
        </div>
        <HelpCenter />
      </div>
      <StatusBar />
      <RedArrow />
    </div>
  );
}
